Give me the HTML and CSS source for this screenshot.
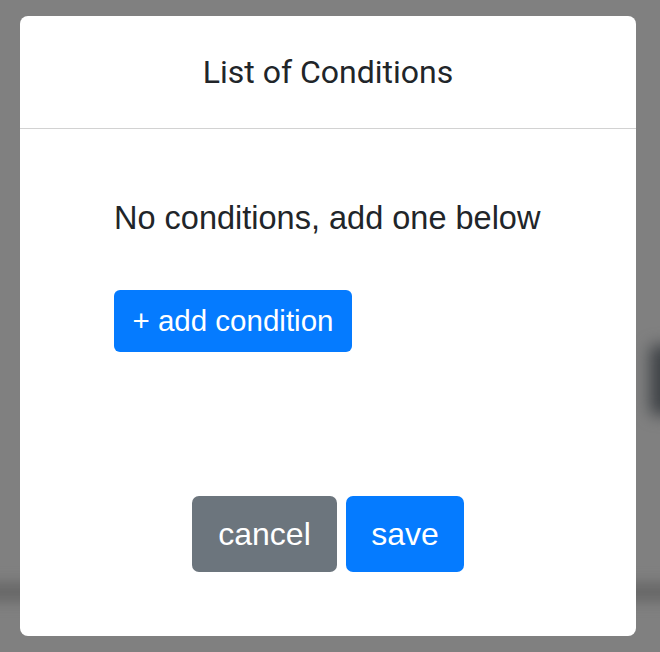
FILE: index.html
```html
<!DOCTYPE html>
<html>
<head>
<meta charset="utf-8">
<link rel="stylesheet" href="styles.css">
</head>
<body>
<div class="backdrop">
  <div class="ghost ghost-right"></div>
  <div class="ghost ghost-band"></div>
  <div class="modal">
    <div class="modal-header"><h2 class="title">List of Conditions</h2></div>
    <div class="modal-body">
      <p class="empty">No conditions, add one below</p>
      <button class="btn btn-primary btn-add">+ add condition</button>
    </div>
    <div class="modal-footer">
      <button class="btn btn-secondary btn-lg btn-cancel">cancel</button>
      <button class="btn btn-primary btn-lg btn-save">save</button>
    </div>
  </div>
</div>
</body>
</html>
```
FILE: styles.css
```css
html, body { margin: 0; padding: 0; }
body { background: #808080; font-family: "Liberation Sans", Arial, sans-serif; }
.backdrop { position: relative; width: 660px; height: 652px; overflow: hidden; padding-top: 16px; box-sizing: border-box; }
.ghost { position: absolute; filter: blur(8px); }
.ghost-right { left: 650px; top: 345px; width: 40px; height: 70px; background: #3e4246; border-radius: 6px; }
.ghost-band { left: -20px; top: 585px; width: 700px; height: 14px; background: #5e5e5e; }
.modal { position: relative; margin-left: 20px; width: 616px; height: 620px; background: #fff; border-radius: 8px; display: flex; flex-direction: column; }
.modal-header { height: 112px; border-bottom: 1px solid #d2d2d2; display: flex; align-items: center; justify-content: center; }
.title { margin: 0; font-family: Roboto, "Liberation Sans", sans-serif; font-weight: 400; font-size: 32px; color: #212529; }
.modal-body { flex: 1; padding: 0 94px; }
.empty { margin: 69px 0 0; font-size: 32.5px; line-height: 40px; color: #212529; white-space: nowrap; }
.btn { border: 0; color: #fff; font-family: "Liberation Sans", Arial, sans-serif; cursor: pointer; display: inline-flex; align-items: center; justify-content: center; padding: 0; }
.btn-primary { background: #057bff; }
.btn-secondary { background: #6c757d; }
.btn-add { margin-top: 52px; width: 238px; height: 62px; font-size: 29.5px; border-radius: 6px; }
.modal-footer { display: flex; justify-content: center; gap: 9px; padding-bottom: 64px; }
.btn-lg { height: 76px; font-size: 32px; border-radius: 7px; }
.btn-cancel { width: 145px; }
.btn-save { width: 118px; }
```
